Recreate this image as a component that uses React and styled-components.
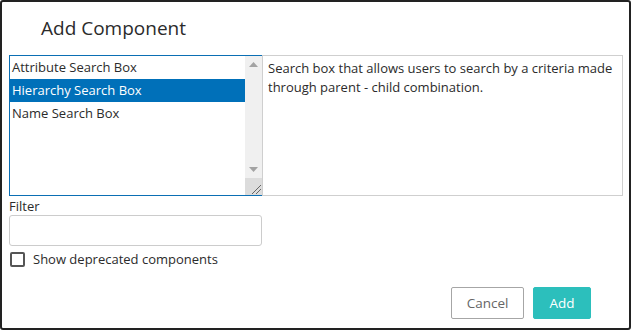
import React from "react";
import styled, { createGlobalStyle } from "styled-components";

const Global = createGlobalStyle`
  html, body { margin: 0; padding: 0; background: #fff; }
  body { font-family: "Open Sans", "Noto Sans", sans-serif; color: #333; }
  * { box-sizing: border-box; }
`;

const Dialog = styled.div`
  width: 631px;
  height: 330px;
  border: 2px solid #222;
  border-radius: 3px;
  background: #fff;
  display: flex;
  flex-direction: column;
  padding: 0 0 0 7px;
`;

const Title = styled.h1`
  margin: 0;
  height: 53px;
  padding: 13px 0 0 32px;
  font-size: 19px;
  font-weight: 400;
  color: #2b2b2b;
  line-height: 26px;
`;

const TopRow = styled.div`
  display: flex;
  height: 141px;
`;

const ListBox = styled.div`
  width: 254px;
  height: 141px;
  border: 1px solid #0b6fb4;
  display: flex;
`;

const Items = styled.div`
  flex: 1;
  display: flex;
  flex-direction: column;
`;

const Item = styled.div`
  height: 23px;
  line-height: 23px;
  padding-left: 2px;
  font-size: 13px;
  color: ${(p) => (p.$selected ? "#fff" : "#2b2b2b")};
  background: ${(p) => (p.$selected ? "#0070b9" : "transparent")};
  white-space: nowrap;
`;

const Scrollbar = styled.div`
  width: 17px;
  background: #f0f0f0;
  display: flex;
  flex-direction: column;
  align-items: center;
`;

const Arrow = styled.div`
  height: 17px;
  width: 17px;
  display: flex;
  align-items: center;
  justify-content: center;
`;

const Track = styled.div`
  flex: 1;
`;

const Grip = styled.div`
  width: 17px;
  height: 17px;
  background: #dcdcdc;
  display: flex;
  align-items: flex-end;
  justify-content: flex-end;
`;

const Description = styled.div`
  width: 361px;
  height: 141px;
  border: 1px solid #cfcfcf;
  margin-left: -1px;
  padding: 3px 5px;
  font-size: 13px;
  line-height: 19px;
  color: #2b2b2b;
`;

const FilterLabel = styled.label`
  display: block;
  margin-top: 3px;
  font-size: 13px;
  line-height: 15px;
  color: #2b2b2b;
`;

const FilterInput = styled.input`
  display: block;
  width: 253px;
  height: 31px;
  margin-top: 1px;
  border: 1px solid #cccccc;
  border-radius: 3px;
  outline: none;
  font-family: inherit;
  font-size: 13px;
  padding: 0 6px;
`;

const CheckRow = styled.label`
  display: flex;
  align-items: center;
  margin-top: 5px;
  gap: 8px;
  font-size: 13px;
  color: #2b2b2b;
  height: 16px;
`;

const Box = styled.span`
  width: 15px;
  height: 15px;
  border: 2px solid #555;
  border-radius: 2px;
  background: #fff;
  margin-left: 1px;
`;

const Footer = styled.div`
  display: flex;
  justify-content: flex-end;
  gap: 9px;
  margin-top: auto;
  padding: 0 38px 9px 0;
`;

const Button = styled.button`
  height: 32px;
  padding: 0;
  width: ${(p) => (p.$primary ? "58px" : "73px")};
  border-radius: 2px;
  font-family: inherit;
  font-size: 13.5px;
  border: 1px solid ${(p) => (p.$primary ? "#2cbfbc" : "#a6a6a6")};
  background: ${(p) => (p.$primary ? "#2cbfbc" : "#fff")};
  color: ${(p) => (p.$primary ? "#fff" : "#666")};
`;

const Triangle = ({ down }) => (
  <svg width="9" height="5" viewBox="0 0 9 5">
    <polygon
      points={down ? "0,0 9,0 4.5,5" : "0,5 9,5 4.5,0"}
      fill="#a3a3a3"
    />
  </svg>
);

export default function App() {
  const items = ["Attribute Search Box", "Hierarchy Search Box", "Name Search Box"];
  return (
    <>
      <Global />
      <Dialog>
        <Title>Add Component</Title>
        <TopRow>
          <ListBox>
            <Items>
              {items.map((it, i) => (
                <Item key={it} $selected={i === 1}>
                  {it}
                </Item>
              ))}
            </Items>
            <Scrollbar>
              <Arrow>
                <Triangle />
              </Arrow>
              <Track />
              <Arrow>
                <Triangle down />
              </Arrow>
              <Grip>
                <svg width="12" height="12" viewBox="0 0 12 12">
                  <line x1="11" y1="2" x2="2" y2="11" stroke="#666" strokeWidth="1" />
                  <line x1="11" y1="6" x2="6" y2="11" stroke="#666" strokeWidth="1" />
                </svg>
              </Grip>
            </Scrollbar>
          </ListBox>
          <Description>
            Search box that allows users to search by a criteria made through
            parent - child combination.
          </Description>
        </TopRow>
        <FilterLabel>Filter</FilterLabel>
        <FilterInput />
        <CheckRow>
          <Box />
          Show deprecated components
        </CheckRow>
        <Footer>
          <Button>Cancel</Button>
          <Button $primary>Add</Button>
        </Footer>
      </Dialog>
    </>
  );
}
